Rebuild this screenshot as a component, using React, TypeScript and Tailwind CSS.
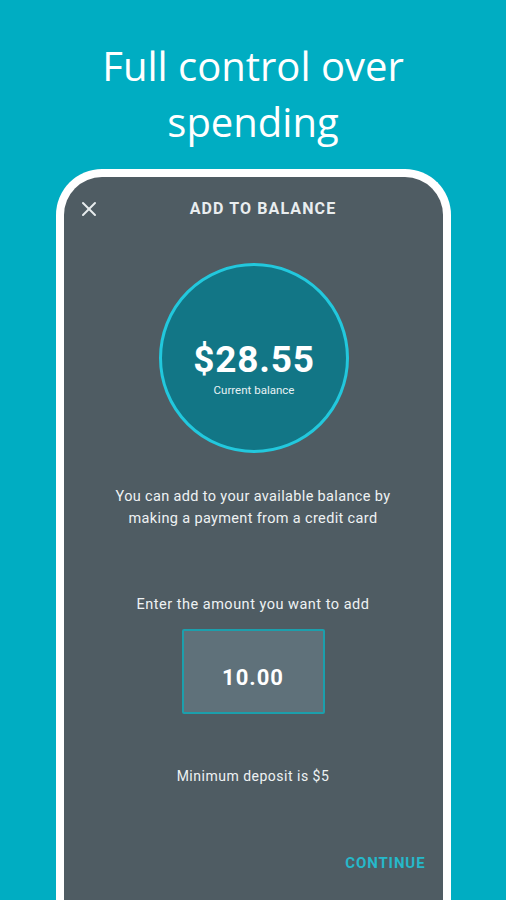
import { X } from "lucide-react"

export default function App() {
  return (
    <div className="w-[506px] h-[900px] overflow-hidden bg-[#00adc2] flex flex-col items-center font-['Roboto',sans-serif]">
      <h1 className="pt-[38px] text-center text-white text-[40px] leading-[56px] font-normal font-['Open_Sans',sans-serif]">
        Full control over
        <br />
        spending
      </h1>

      <div className="mt-[19px] w-[395px] h-[760px] shrink-0 border-8 border-b-0 border-white rounded-t-[46px] bg-[#4f5c63] flex flex-col text-[#eef2f3]">
        {/* header */}
        <div className="h-[64px] flex items-center px-[13px]">
          <X className="w-[24px] h-[24px] text-[#e8ecee]" strokeWidth={2} />
          <div className="flex-1 mr-[4px] text-center text-[16px] font-bold tracking-[1.1px] text-[#e9edef]">
            ADD TO BALANCE
          </div>
        </div>

        {/* balance circle */}
        <div className="mt-[22px] mx-auto w-[190px] h-[190px] rounded-full border-[3px] border-[#22c8dd] bg-[#127686] flex flex-col items-center justify-center pt-[18px] translate-x-[1px]">
          <div className="text-[37px] leading-[40px] font-bold tracking-[0.8px] text-white translate-y-[2px]">$28.55</div>
          <div className="text-[11.5px] leading-[14px] mt-[5px] text-[#e6f2f4]">Current balance</div>
        </div>

        <p className="mt-[33px] text-center text-[14.5px] leading-[22px] tracking-[0.35px]">
          You can add to your available balance by
          <br />
          making a payment from a credit card
        </p>

        <p className="mt-[64px] text-center text-[14.5px] leading-[22px] tracking-[0.5px]">Enter the amount you want to add</p>

        <div className="mt-[13px] mx-auto w-[143px] h-[85px] border-2 border-[#1c9fac] bg-[#5f717a] flex items-center justify-center rounded-[2px]">
          <span className="text-[22px] font-bold tracking-[1px] text-white translate-y-[6px]">10.00</span>
        </div>

        <p className="mt-[51px] text-center text-[14px] leading-[22px] tracking-[0.5px]">Minimum deposit is $5</p>

        <div className="mt-[65px] pr-[17px] flex justify-end">
          <span className="text-[15px] leading-[22px] font-bold tracking-[0.9px] text-[#26b8c9]">CONTINUE</span>
        </div>
      </div>
    </div>
  )
}
